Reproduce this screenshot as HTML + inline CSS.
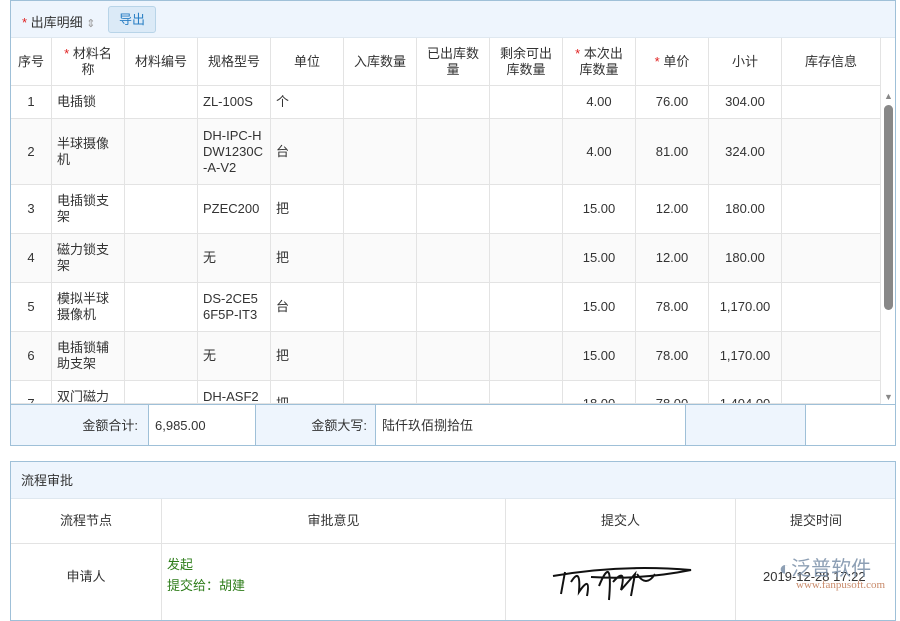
<!DOCTYPE html>
<html><head><meta charset="utf-8"><style>
*{box-sizing:border-box;margin:0;padding:0}
body{width:900px;height:600px;background:#fff;font-family:"Liberation Sans","Noto Sans CJK SC",sans-serif;font-size:13px;color:#333;position:relative;overflow:hidden}
.a{position:absolute}
.box{position:absolute;border:1px solid #9fc0d8}
.c{position:absolute;border-right:1px solid #e3e3e3;border-bottom:1px solid #e3e3e3;display:flex;align-items:center;line-height:16px;overflow:hidden}
.ctr{justify-content:center;text-align:center}
.r{color:#e02020}
</style></head><body>
<div class="box" style="left:10px;top:0;width:886px;height:446px;overflow:hidden">
 <div class="a" style="left:0;top:0;width:884px;height:37px;background:#eef5fd;border-bottom:1px solid #dfe8f0"></div>
 <div class="a" style="left:11px;top:11px;font-size:13px"><span class="r">*</span> 出库明细 <span style="color:#999;font-size:11px">⇕</span></div>
 <div class="a" style="left:97px;top:5px;width:48px;height:27px;border:1px solid #b8d4e8;background:#dbeaf7;border-radius:3px;color:#2a7fc4;text-align:center;line-height:25px">导出</div>
 <div id="t"></div>
 <div class="a" style="left:870px;top:37px;width:14px;height:48px;background:#fff"></div>
 <div class="a" style="left:872px;top:85px;width:12px;height:319px;background:#fff"></div>
 <div class="a" style="left:873px;top:90px;color:#888;font-size:9px">▲</div>
 <div class="a" style="left:873px;top:104px;width:9px;height:205px;background:#888;border-radius:5px"></div>
 <div class="a" style="left:873px;top:391px;color:#888;font-size:9px">▼</div>
 <div class="a" style="left:0;top:403px;width:884px;height:42px;border-top:1px solid #9fc0d8;background:#fff"></div>
 <div class="a" style="left:0;top:404px;width:138px;height:41px;background:#eef5fd;border-right:1px solid #9fc0d8;text-align:right;padding-right:10px;line-height:41px">金额合计:</div>
 <div class="a" style="left:138px;top:404px;width:107px;height:41px;border-right:1px solid #9fc0d8;padding-left:6px;line-height:41px">6,985.00</div>
 <div class="a" style="left:245px;top:404px;width:120px;height:41px;background:#eef5fd;border-right:1px solid #9fc0d8;text-align:right;padding-right:8px;line-height:41px">金额大写:</div>
 <div class="a" style="left:365px;top:404px;width:310px;height:41px;border-right:1px solid #9fc0d8;padding-left:6px;line-height:41px">陆仟玖佰捌拾伍</div>
 <div class="a" style="left:675px;top:404px;width:120px;height:41px;background:#eef5fd;border-right:1px solid #9fc0d8"></div>
</div>
<div class="box" style="left:10px;top:461px;width:886px;height:160px;overflow:hidden">
 <div class="a" style="left:0;top:0;width:884px;height:37px;background:#eef5fd;border-bottom:1px solid #dfe8f0;padding-left:10px;line-height:37px">流程审批</div>
 <div class="c ctr" style="left:0;top:37px;width:151px;height:45px">流程节点</div>
 <div class="c ctr" style="left:151px;top:37px;width:344px;height:45px">审批意见</div>
 <div class="c ctr" style="left:495px;top:37px;width:230px;height:45px">提交人</div>
 <div class="c ctr" style="left:725px;top:37px;width:160px;height:45px;border-right:0">提交时间</div>
 <div class="c ctr" style="left:0;top:82px;width:151px;height:80px;align-items:flex-start;padding-top:25px">申请人</div>
 <div class="c" style="left:151px;top:82px;width:344px;height:80px;color:#2e7d1a;padding-left:5px;line-height:21px;display:block;padding-top:10px">发起<br>提交给：胡建</div>
 <div class="c" style="left:495px;top:82px;width:230px;height:80px;display:block">
  <svg width="150" height="50" viewBox="0 0 150 50" style="margin:8px 0 0 45px"><path d="M2 24 Q70 12 140 18 Q90 28 40 25 M14 20 L10 42 M20 30 Q30 14 28 40 Q40 22 36 44 M48 34 Q62 0 58 48 M62 30 Q76 14 70 38 L84 22 L80 44 M86 22 Q95 36 104 22" stroke="#111" stroke-width="2" fill="none"/></svg>
 </div>
 <div class="c" style="left:725px;top:82px;width:160px;height:80px;border-right:0;padding-left:27px;align-items:flex-start;padding-top:25px">2019-12-28 17:22</div>
 <div class="a" style="left:768px;top:90px;color:#7a8fa8;font-size:20px;opacity:.85">◐泛普软件</div>
 <div class="a" style="left:785px;top:117px;color:#c88a6a;font-size:11px;font-family:'Liberation Serif',serif">www.fanpusoft.com</div>
</div>
<script>
var cols=[0,41,114,187,260,333,406,479,552,625,698,771,870];
var heads=['序号','<span class=r>*</span> 材料名<br>称','材料编号','规格型号','单位','入库数量','已出库数<br>量','剩余可出<br>库数量','<span class=r>*</span> 本次出<br>库数量','<span class=r>*</span> 单价','小计','库存信息'];
var rows=[[85,33,['1','电插锁','','ZL-100S','个','','','','4.00','76.00','304.00','']],
[118,66,['2','半球摄像<br>机','','DH-IPC-H<br>DW1230C<br>-A-V2','台','','','','4.00','81.00','324.00','']],
[184,49,['3','电插锁支<br>架','','PZEC200','把','','','','15.00','12.00','180.00','']],
[233,49,['4','磁力锁支<br>架','','无','把','','','','15.00','12.00','180.00','']],
[282,49,['5','模拟半球<br>摄像机','','DS-2CE5<br>6F5P-IT3','台','','','','15.00','78.00','1,170.00','']],
[331,49,['6','电插锁辅<br>助支架','','无','把','','','','15.00','78.00','1,170.00','']],
[380,23,['7','双门磁力','','DH-ASF2','把','','','','18.00','78.00','1,404.00','']]];
var h='';
for(var i=0;i<12;i++){h+='<div class="c ctr" style="left:'+cols[i]+'px;top:37px;width:'+(cols[i+1]-cols[i])+'px;height:48px"><span>'+heads[i]+'</span></div>';}
rows.forEach(function(r,k){for(var i=0;i<12;i++){var left=(i==1||i==3||i==4);var st=r[0]==380?'align-items:flex-start;padding-top:8px;':'';
if(r[0]==380&&(i==0||i==4||i>=8))st='align-items:flex-start;padding-top:15px;';
h+='<div class="c '+(left?'':'ctr')+'" style="'+st+'left:'+cols[i]+'px;top:'+r[0]+'px;width:'+(cols[i+1]-cols[i])+'px;height:'+r[1]+'px;'+(left?'padding-left:5px;':'')+(k%2?'background:#fafafa;':'')+'"><span>'+r[2][i]+'</span></div>';}});
document.getElementById('t').innerHTML=h;
</script>
</body></html>
